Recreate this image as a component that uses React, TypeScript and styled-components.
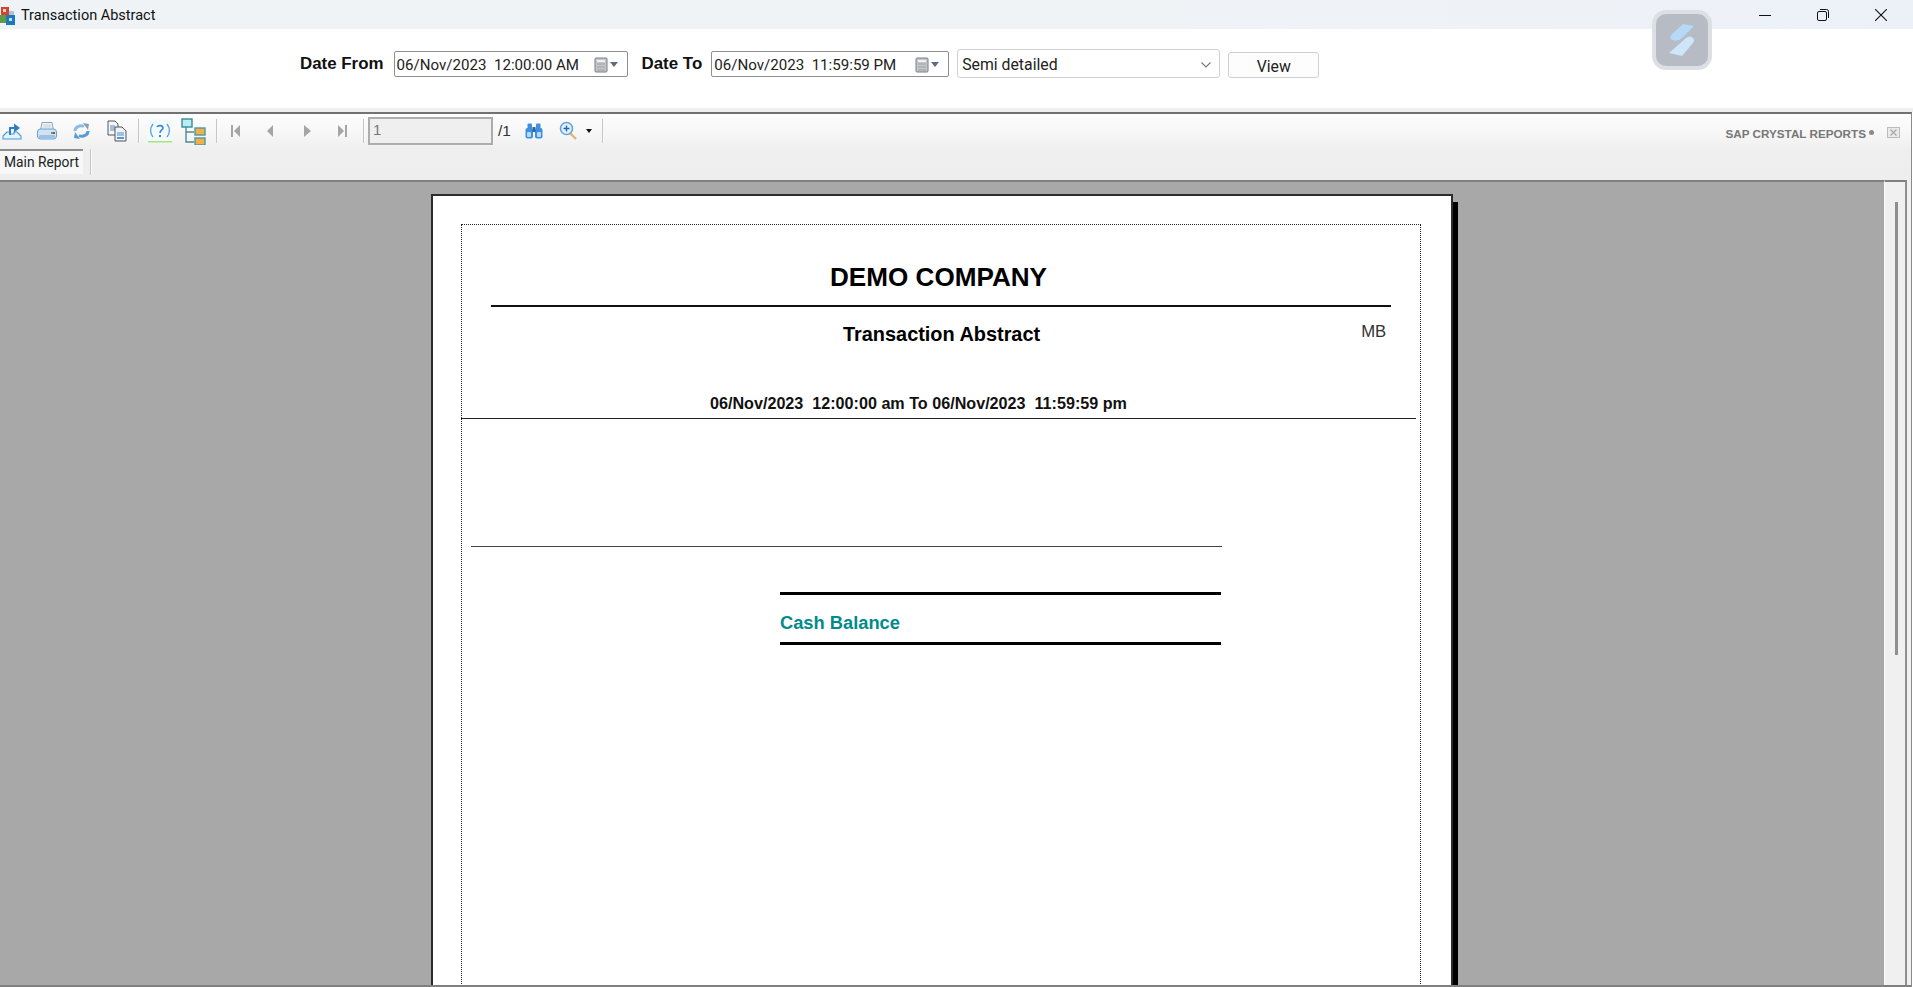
import React from "react";
import styled, { createGlobalStyle } from "styled-components";

const GlobalStyle = createGlobalStyle`
  html, body {
    margin: 0;
    padding: 0;
    height: 100%;
    overflow: hidden;
    background: #fff;
  }
  #root {
    height: 100%;
  }
`;

const Window = styled.div`
  position: relative;
  display: flex;
  flex-direction: column;
  height: 987px;
  overflow: hidden;
  font-family: "Liberation Sans", Arial, sans-serif;
`;

/* title bar */
const TitleBar = styled.div`
  display: flex;
  align-items: center;
  flex: 0 0 29px;
  background: linear-gradient(90deg, #eff3f6 0%, #f0f3f6 60%, #ecf1f8 100%);
`;

const AppTitle = styled.span`
  margin-left: 5px;
  padding-top: 2px;
  font-family: Roboto, "Noto Sans", sans-serif;
  font-size: 14.5px;
  color: #111;
`;

const WindowControls = styled.div`
  display: flex;
  align-items: center;
  margin-left: auto;
  padding-right: 26px;
  gap: 46px;
`;

const FloatBadge = styled.div`
  position: absolute;
  left: 1652px;
  top: 10px;
  width: 60px;
  height: 60px;
  box-sizing: border-box;
  border: 4px solid #dcdfe4;
  border-radius: 14px;
  background: #b7bbc3;
  display: flex;
  align-items: center;
  justify-content: center;
`;

/* filter form */
const FilterBar = styled.div`
  display: flex;
  align-items: flex-start;
  flex: 0 0 83px;
  box-sizing: border-box;
  padding: 20px 0 0 300px;
  background: linear-gradient(#fff 79px, #f0f0f0 79px);
`;

const FilterLabel = styled.span<{ $gap: number }>`
  margin-right: ${(p) => p.$gap}px;
  line-height: 30px;
  font-size: 16.9px;
  font-weight: 700;
  color: #111;
`;

const DateField = styled.div<{ $width: number }>`
  display: flex;
  align-items: center;
  box-sizing: border-box;
  width: ${(p) => p.$width}px;
  height: 26px;
  margin: 2px 14px 0 0;
  padding: 1px 5px 0 2px;
  border: 1px solid #8f8f8f;
  border-radius: 2px;
  background: #fff;
  font-family: Roboto, "Liberation Sans", sans-serif;
  font-size: 15.1px;
  color: #222;
  white-space: pre;
`;

const FieldIcon = styled.span`
  display: flex;
  margin-left: auto;
`;

const ComboBox = styled.div`
  display: flex;
  align-items: center;
  justify-content: space-between;
  box-sizing: border-box;
  width: 263px;
  height: 29px;
  margin: 0 8px 0 -6px;
  padding: 2px 7px 0 4px;
  border: 1px solid #d0d0d0;
  border-radius: 3px;
  background: #fff;
  font-family: Roboto, "Liberation Sans", sans-serif;
  font-size: 15.8px;
  color: #222;
`;

const ViewButton = styled.button`
  box-sizing: border-box;
  width: 91px;
  height: 26px;
  margin-top: 3px;
  padding: 3px 0 0;
  border: 1px solid #d0d0d0;
  border-radius: 3px;
  background: #fdfdfd;
  font-family: Roboto, "Liberation Sans", sans-serif;
  font-size: 15.8px;
  color: #222;
`;

/* crystal viewer */
const Viewer = styled.div`
  display: flex;
  flex-direction: column;
  flex: 1;
  min-height: 0;
  margin-right: 1px;
  border-top: 2px solid #727272;
  border-right: 1px solid #8a8a8a;
  border-bottom: 2px solid #808080;
  background: #f0f0f0;
`;

const ViewerHead = styled.div`
  flex: 0 0 66px;
  background: linear-gradient(#fdfdfd 0, #f8f8f8 16px, #efefef 36px, #eeeeee 100%);
`;

const ToolRow = styled.div`
  display: flex;
  align-items: center;
  height: 34px;
`;

const Slot = styled.span<{ $left: number }>`
  display: flex;
  flex: none;
  margin-left: ${(p) => p.$left}px;
`;

const Separator = styled.span<{ $left: number; $height?: number }>`
  flex: none;
  width: 2px;
  height: ${(p) => p.$height ?? 24}px;
  margin-left: ${(p) => p.$left}px;
  background: #c6c6c6;
  border-right: 1px solid #fafafa;
  box-sizing: border-box;
`;

const PageInput = styled.div`
  flex: none;
  box-sizing: border-box;
  width: 125px;
  height: 28px;
  margin-left: 3px;
  padding: 2px 0 0 3px;
  border: 2px solid #acacac;
  background: #efefef;
  font-size: 15px;
  line-height: 18px;
  color: #777;
`;

const PageCount = styled.span`
  margin-left: 5px;
  font-size: 15.5px;
  color: #333;
`;

const Brand = styled.span`
  margin-left: auto;
  font-size: 11.7px;
  font-weight: 700;
  color: #777;
  white-space: nowrap;
  padding-top: 4px;
`;

const Registered = styled.i`
  display: inline-block;
  width: 5px;
  height: 5px;
  margin-left: 3px;
  border-radius: 50%;
  background: #8a8a8a;
  vertical-align: 3px;
`;

const CloseSlot = styled.span`
  display: flex;
  margin: 0 11px 0 13px;
  padding-top: 3px;
`;

const TabRow = styled.div`
  display: flex;
  align-items: flex-start;
  height: 32px;
  padding-top: 1px;
  box-sizing: border-box;
`;

const Tab = styled.div`
  box-sizing: border-box;
  width: 83px;
  height: 25px;
  padding-left: 4px;
  border-top: 2px solid #8e8e8e;
  background: #f7f7f7;
  font-family: Roboto, "Noto Sans", sans-serif;
  font-size: 13.8px;
  line-height: 23px;
  color: #222;
  white-space: nowrap;
`;

const ViewerBody = styled.div`
  display: flex;
  flex: 1;
  min-height: 0;
  padding-right: 4px;
`;

const Canvas = styled.div`
  display: flex;
  justify-content: center;
  flex: 1;
  min-width: 0;
  overflow: hidden;
  padding-top: 12px;
  border-top: 2px solid #808080;
  background: #a8a8a8;
`;

const ScrollTrack = styled.div`
  flex: 0 0 23px;
  box-sizing: border-box;
  padding: 20px 0 0 10px;
  border-top: 2px solid #808080;
  border-right: 2px solid #8e8e8e;
  border-left: 1px solid #fafafa;
  background: #f0f0f0;
`;

const ScrollThumb = styled.div`
  width: 3px;
  height: 453px;
  background: #8f8f8f;
`;

/* report page */
const ReportPage = styled.div`
  flex: none;
  box-sizing: border-box;
  width: 1022px;
  height: 1300px;
  padding: 28px 0 0 28px;
  border: 2px solid #2c2c2c;
  background: #fff;
  box-shadow: 5px 8px 0 #000;
`;

const ReportArea = styled.div`
  box-sizing: border-box;
  width: 960px;
  height: 1100px;
  border: 1px dotted #222;
`;

const CompanyName = styled.div`
  height: 80px;
  box-sizing: border-box;
  padding: 37px 0 0 368px;
  font-size: 26.1px;
  font-weight: 700;
  line-height: 30px;
  color: #000;
`;

const Rule = styled.div<{ $left: number; $width: number; $top?: number; $height?: number; $color?: string }>`
  width: ${(p) => p.$width}px;
  height: ${(p) => p.$height ?? 1}px;
  margin-left: ${(p) => p.$left}px;
  margin-top: ${(p) => p.$top ?? 0}px;
  background: ${(p) => p.$color ?? "#222"};
`;

const TitleRow = styled.div`
  display: flex;
  align-items: flex-start;
  height: 70px;
  box-sizing: border-box;
  padding: 14px 0 0 381px;
`;

const ReportTitle = styled.span`
  font-size: 19.9px;
  font-weight: 700;
  line-height: 26px;
  color: #000;
`;

const ReportCode = styled.span`
  margin-left: 321px;
  font-size: 16.7px;
  line-height: 22px;
  color: #333;
`;

const RangeRow = styled.div`
  height: 41px;
  box-sizing: border-box;
  padding: 16px 0 0 248px;
  font-size: 16.15px;
  font-weight: 700;
  line-height: 20px;
  color: #111;
  white-space: pre;
`;

const BalanceBox = styled.div`
  box-sizing: border-box;
  width: 441px;
  height: 53px;
  margin: 45px 0 0 318px;
  border-top: 3px solid #000;
  border-bottom: 3px solid #000;
  font-size: 18.3px;
  font-weight: 700;
  line-height: 55px;
  color: #008b8b;
`;

/* icons */
const AppIcon = () => (
  <svg width="16" height="20" viewBox="0 0 16 20" style={{ marginTop: 2 }}>
    <rect x="1" y="1" width="8" height="8" fill="#d8412f" />
    <rect x="3" y="3" width="3" height="3" fill="#f3d9c0" />
    <rect x="0" y="9" width="6" height="8" fill="#5f9a4a" />
    <rect x="6" y="9" width="9" height="10" fill="#1f78b8" />
    <rect x="9" y="5" width="5" height="4" fill="#b0c4d8" />
    <rect x="9" y="12" width="3" height="3" fill="#bfe0f5" />
  </svg>
);

const MinimizeIcon = () => (
  <svg width="12" height="12" viewBox="0 0 12 12">
    <path d="M0 6.5h12" stroke="#111" strokeWidth="1" fill="none" />
  </svg>
);

const RestoreIcon = () => (
  <svg width="12" height="12" viewBox="0 0 12 12" fill="none" stroke="#111" strokeWidth="1">
    <rect x="0.5" y="2.5" width="9" height="9" rx="1.5" />
    <path d="M3 .5h6.5a2 2 0 0 1 2 2V9" />
  </svg>
);

const CloseIcon = () => (
  <svg width="12" height="12" viewBox="0 0 12 12">
    <path d="M0 0l12 12M12 0L0 12" stroke="#111" strokeWidth="1.1" fill="none" />
  </svg>
);

const BadgeLogo = () => (
  <svg width="28" height="34" viewBox="0 0 28 34">
    <path d="M15 1L26 3 14 15Q10 19 4 17 1 15 3 12z" fill="#b5d9f7" />
    <path d="M18 15Q22 12 25 15 27 17 25 20L14 33 1 30z" fill="#cfe6fa" />
  </svg>
);

const CalendarIcon = () => (
  <svg width="28" height="16" viewBox="0 0 28 16">
    <rect x="1" y="1" width="12" height="14" rx="1" fill="#c4c6ca" stroke="#7d7f84" />
    <rect x="3" y="3" width="8" height="2" fill="#eef0f2" />
    <path d="M3 7h8M3 10h8M3 13h8" stroke="#9ea1a6" strokeWidth="1" />
    <path d="M16 5h8l-4 5z" fill="#5c6b86" />
  </svg>
);

const ChevronIcon = () => (
  <svg width="12" height="8" viewBox="0 0 12 8">
    <path d="M1.5 1.5L6 6l4.5-4.5" fill="none" stroke="#777" strokeWidth="1.1" />
  </svg>
);

const ExportIcon = () => (
  <svg width="20" height="18" viewBox="0 0 20 18" fill="none">
    <path d="M5 10L1 14v3h18v-3l-4-4h-3v2H8v-2z" stroke="#4a9ad8" strokeWidth="1.1" fill="#e4f2fc" />
    <path d="M8 13V6h5" stroke="#2f7fc8" strokeWidth="2" />
    <path d="M12 1.5l6 4.5-6 4.5z" fill="#2f7fc8" />
  </svg>
);

const PrintIcon = () => (
  <svg width="20" height="18" viewBox="0 0 20 18">
    <path d="M5 0.5h10l1.5 8h-13z" fill="#f2f5f8" stroke="#93a0ae" />
    <path d="M6 3h8M6 5h8" stroke="#c5ced8" />
    <rect x="0.5" y="7" width="19" height="10" rx="3" fill="#cfe3f5" stroke="#6aa0d0" />
    <rect x="2" y="13" width="16" height="3" rx="1" fill="#9cc1e2" />
    <rect x="16" y="10" width="2" height="2" fill="#c23a3a" />
    <rect x="14" y="10" width="2" height="2" fill="#4caf50" />
  </svg>
);

const RefreshIcon = () => (
  <svg width="17" height="16" viewBox="0 0 17 16" fill="none">
    <path d="M2 8a6 5 0 0 1 9-4.5" stroke="#8bbde6" strokeWidth="3" />
    <path d="M15 8a6 5 0 0 1-9 4.5" stroke="#5a9bd6" strokeWidth="3" />
    <path d="M10 0l6 1-1 6z" fill="#8a9eb2" />
    <path d="M7 16l-6-1 1-6z" fill="#5a9bd6" />
  </svg>
);

const CopyIcon = () => (
  <svg width="20" height="22" viewBox="0 0 20 22">
    <path d="M1 1h7l3 3v11H1z" fill="#f6f6f6" stroke="#555" />
    <path d="M3 6h5M3 8h5M3 10h5" stroke="#4f8cc8" />
    <path d="M8 7h7l4 4v10H8z" fill="#eef4fa" stroke="#555" />
    <path d="M10 13h7M10 15h7" stroke="#4f8cc8" />
    <path d="M10 18h7" stroke="#2a74c2" strokeWidth="1.5" />
  </svg>
);

const HelpIcon = () => (
  <svg width="24" height="24" viewBox="0 0 24 24">
    <rect x="0" y="0" width="24" height="22" fill="#f1fbfd" />
    <rect x="0" y="22" width="24" height="1.5" fill="#a6e67e" />
    <path d="M5 5c-3 4-3 9 0 13M19 5c3 4 3 9 0 13" fill="none" stroke="#5a9fe0" strokeWidth="1.3" />
    <path d="M9 8c1-2 6-2 6 1 0 2-3 2-3 5" fill="none" stroke="#3d87d6" strokeWidth="1.6" />
    <rect x="11" y="16" width="2" height="2" fill="#3d87d6" />
  </svg>
);

const TreeIcon = () => (
  <svg width="25" height="27" viewBox="0 0 25 27">
    <path d="M5 9v15h8M5 14h8" fill="none" stroke="#4a8c92" strokeWidth="1.4" />
    <rect x="1" y="1" width="10" height="8" fill="#bfeaf2" stroke="#2f8f9c" strokeWidth="1.4" />
    <rect x="14" y="10" width="10" height="7" fill="#f2b04a" stroke="#4a9aa0" strokeWidth="1.4" />
    <rect x="14" y="20" width="10" height="7" fill="#f2b04a" stroke="#4a9aa0" strokeWidth="1.4" />
  </svg>
);

const FirstIcon = () => (
  <svg width="9" height="12" viewBox="0 0 9 12" fill="#a5a5a5">
    <rect x="0" y="0" width="2" height="12" />
    <path d="M9 0v12L3 6z" />
  </svg>
);

const PrevIcon = () => (
  <svg width="6" height="12" viewBox="0 0 6 12" fill="#a5a5a5">
    <path d="M6 0v12L0 6z" />
  </svg>
);

const NextIcon = () => (
  <svg width="7" height="12" viewBox="0 0 7 12" fill="#a5a5a5">
    <path d="M0 0v12l7-6z" />
  </svg>
);

const LastIcon = () => (
  <svg width="9" height="12" viewBox="0 0 9 12" fill="#a5a5a5">
    <path d="M0 0v12l6-6z" />
    <rect x="7" y="0" width="2" height="12" />
  </svg>
);

const BinocularsIcon = () => (
  <svg width="18" height="16" viewBox="0 0 18 16">
    <rect x="2.5" y="0.5" width="4.5" height="7" rx="1" fill="#3f8fdc" />
    <rect x="11" y="0.5" width="4.5" height="7" rx="1" fill="#3f8fdc" />
    <rect x="0.5" y="5" width="7.5" height="10.5" rx="2" fill="#3f8fdc" />
    <rect x="10" y="5" width="7.5" height="10.5" rx="2" fill="#3f8fdc" />
    <rect x="7.5" y="4" width="3" height="5" fill="#2468b0" />
    <rect x="2" y="9" width="4" height="5" rx="1" fill="#b4dbf8" />
    <rect x="12" y="9" width="4" height="5" rx="1" fill="#b4dbf8" />
  </svg>
);

const ZoomIcon = () => (
  <svg width="19" height="20" viewBox="0 0 19 20" fill="none">
    <path d="M11 12l6 6" stroke="#e0b27a" strokeWidth="2.4" />
    <circle cx="7.5" cy="7.5" r="6" fill="#e4f2fc" stroke="#63a4e0" strokeWidth="1.6" />
    <path d="M4.5 7.5h6M7.5 4.5v6" stroke="#2c62a8" strokeWidth="1.4" />
  </svg>
);

const CaretIcon = () => (
  <svg width="6" height="4" viewBox="0 0 6 4">
    <path d="M0 0h6L3 4z" fill="#111" />
  </svg>
);

const PanelCloseIcon = () => (
  <svg width="13" height="11" viewBox="0 0 13 11">
    <rect x="0.5" y="0.5" width="12" height="10" fill="#eaeaea" stroke="#bcbcbc" />
    <path d="M3.5 2.5l6 6M9.5 2.5l-6 6" stroke="#a8a8a8" strokeWidth="1.2" />
  </svg>
);

const App = () => {
  return (
    <Window>
      <GlobalStyle />
      <TitleBar>
        <AppIcon />
        <AppTitle>Transaction Abstract</AppTitle>
        <WindowControls>
          <MinimizeIcon />
          <RestoreIcon />
          <CloseIcon />
        </WindowControls>
      </TitleBar>
      <FloatBadge>
        <BadgeLogo />
      </FloatBadge>

      <FilterBar>
        <FilterLabel $gap={10}>Date From</FilterLabel>
        <DateField $width={234}>
          06/Nov/2023  12:00:00 AM
          <FieldIcon>
            <CalendarIcon />
          </FieldIcon>
        </DateField>
        <FilterLabel $gap={9}>Date To</FilterLabel>
        <DateField $width={238}>
          06/Nov/2023  11:59:59 PM
          <FieldIcon>
            <CalendarIcon />
          </FieldIcon>
        </DateField>
        <ComboBox>
          Semi detailed
          <ChevronIcon />
        </ComboBox>
        <ViewButton type="button">View</ViewButton>
      </FilterBar>

      <Viewer>
        <ViewerHead>
          <ToolRow>
            <Slot $left={2}><ExportIcon /></Slot>
            <Slot $left={15}><PrintIcon /></Slot>
            <Slot $left={16}><RefreshIcon /></Slot>
            <Slot $left={17}><CopyIcon /></Slot>
            <Separator $left={11} />
            <Slot $left={8}><HelpIcon /></Slot>
            <Slot $left={9}><TreeIcon /></Slot>
            <Separator $left={10} />
            <Slot $left={13}><FirstIcon /></Slot>
            <Slot $left={27}><PrevIcon /></Slot>
            <Slot $left={31}><NextIcon /></Slot>
            <Slot $left={27}><LastIcon /></Slot>
            <Separator $left={16} />
            <PageInput>1</PageInput>
            <PageCount>/1</PageCount>
            <Slot $left={14}><BinocularsIcon /></Slot>
            <Slot $left={16}><ZoomIcon /></Slot>
            <Slot $left={8}><CaretIcon /></Slot>
            <Separator $left={10} />
            <Brand>
              SAP CRYSTAL REPORTS
              <Registered />
            </Brand>
            <CloseSlot>
              <PanelCloseIcon />
            </CloseSlot>
          </ToolRow>
          <TabRow>
            <Tab>Main Report</Tab>
            <Separator $left={7} $height={26} />
          </TabRow>
        </ViewerHead>

        <ViewerBody>
          <Canvas>
            <ReportPage>
              <ReportArea>
                <CompanyName>DEMO COMPANY</CompanyName>
                <Rule $left={29} $width={900} $height={2} $color="#111" />
                <TitleRow>
                  <ReportTitle>Transaction Abstract</ReportTitle>
                  <ReportCode>MB</ReportCode>
                </TitleRow>
                <RangeRow>06/Nov/2023  12:00:00 am To 06/Nov/2023  11:59:59 pm</RangeRow>
                <Rule $left={-1} $width={955} />
                <Rule $left={9} $width={751} $top={127} $height={1} $color="#444" />
                <BalanceBox>Cash Balance</BalanceBox>
              </ReportArea>
            </ReportPage>
          </Canvas>
          <ScrollTrack>
            <ScrollThumb />
          </ScrollTrack>
        </ViewerBody>
      </Viewer>
    </Window>
  );
};

export default App;
